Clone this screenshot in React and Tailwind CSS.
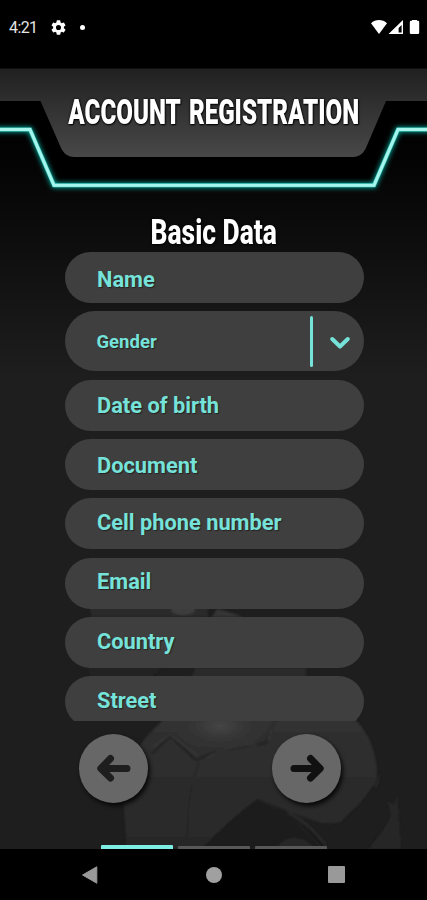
import React, { useState } from 'react';

const fields = [
  { name: 'name', label: 'Name', pad: 'pt-[5px]' },
  { name: 'gender', label: 'Gender', select: true },
  { name: 'birth', label: 'Date of birth', pad: 'pt-[2px]' },
  { name: 'document', label: 'Document', pad: 'pt-[4px]' },
  { name: 'phone', label: 'Cell phone number', pad: 'pb-[1px]' },
  { name: 'email', label: 'Email', pad: 'pb-[2px]' },
  { name: 'country', label: 'Country', pad: 'pb-[1px]' },
  { name: 'street', label: 'Street', pad: 'pb-[1px]' },
];

const StatusBar = () => (
  <div className="h-[68px] shrink-0 bg-black text-white flex items-start justify-between pl-[9px] pr-[7px] pt-[18px]">
    <div className="flex items-center h-[19px]">
      <span className="text-[16px] leading-[19px] w-[29px] tracking-[-0.6px] text-[#e4e4e4]">4:21</span>
      <svg viewBox="2 2 20 20" className="w-[15px] h-[15px] ml-[13px]" fill="#fff">
        <path d="M19.14 12.94c.04-.3.06-.61.06-.94s-.02-.64-.07-.94l2.03-1.58a.49.49 0 0 0 .12-.61l-1.92-3.32a.49.49 0 0 0-.59-.22l-2.39.96a7 7 0 0 0-1.62-.94l-.36-2.54A.48.48 0 0 0 13.92 2.4h-3.84a.47.47 0 0 0-.47.41l-.36 2.54c-.59.24-1.13.57-1.62.94l-2.39-.96a.48.48 0 0 0-.59.22L2.74 8.87a.47.47 0 0 0 .12.61l2.03 1.58a7 7 0 0 0 0 1.88l-2.03 1.58a.49.49 0 0 0-.12.61l1.92 3.32c.12.22.37.29.59.22l2.39-.96c.5.38 1.03.7 1.62.94l.36 2.54c.05.24.24.41.48.41h3.84c.24 0 .44-.17.47-.41l.36-2.54c.59-.24 1.13-.56 1.62-.94l2.39.96c.22.08.47 0 .59-.22l1.92-3.32a.47.47 0 0 0-.12-.61zM12 15.4a3.4 3.4 0 1 1 0-6.8 3.4 3.4 0 0 1 0 6.8z" />
      </svg>
      <span className="w-[5px] h-[5px] rounded-full bg-white ml-[14px]" />
    </div>
    <svg viewBox="0 0 50 18" className="w-[50px] h-[18px]" fill="#fff">
      <path d="M1 5.3C5.5 1 12.5 1 17 5.3L9 16z" />
      <path fillRule="evenodd" d="M33 2v14H18.500zM31.600 7v7.600h-3V10z" />
      <path d="M42 2.800V2h5v.8h1q1.200 0 1.200 1.200v10.800q0 1.200-1.200 1.200h-7q-1.200 0-1.200-1.200V4q0-1.200 1.200-1.200z" />
    </svg>
  </div>
);

const Header = () => (
  <header className="relative h-[132px] shrink-0">
    <svg viewBox="0 0 427 132" className="block w-full h-full">
      <defs>
        <linearGradient id="panel" x1="0" y1="0" x2="0" y2="1">
          <stop offset="0" stopColor="#202020" />
          <stop offset="1" stopColor="#484848" />
        </linearGradient>
        <filter id="glow" x="-10%" y="-40%" width="120%" height="180%">
          <feGaussianBlur stdDeviation="2.4" />
        </filter>
      </defs>
      <path d="M0 33H427V61H398L374 117H54L30 61H0z" fill="#000" />
      <path d="M0 .5H427V33H386L365.500 81Q361 89 353 89H74Q66 89 61.500 81L40.500 33H0z" fill="url(#panel)" />
      <path d="M-6 61.500H30L54 117.300H374L398 61.500H433" fill="none" stroke="#00a99b" strokeWidth="5" filter="url(#glow)" />
      <path d="M-6 61.500H30L54 117.300H374L398 61.500H433" fill="none" stroke="#51d5cb" strokeWidth="4" />
      <path d="M-6 61.500H30L54 117.300H374L398 61.500H433" fill="none" stroke="#a6f5ed" strokeWidth="2.800" />
    </svg>
    <div className="absolute inset-x-0 top-[23px] flex justify-center">
      <h1 className="whitespace-nowrap text-white text-[35px] leading-[44px] font-black scale-x-[0.69] [word-spacing:4px] [text-shadow:0_0_3px_#000,1px_1px_2px_#000]">
        ACCOUNT REGISTRATION
      </h1>
    </div>
  </header>
);

// faint football behind the lower half of the form
const BallArt = () => (
  <svg viewBox="0 0 427 260" className="absolute left-0 bottom-0 w-full h-[260px]">
    <defs>
      <linearGradient id="ball" x1="0" y1="0" x2="0" y2="1">
        <stop offset="0" stopColor="#333" />
        <stop offset="1" stopColor="#282828" />
      </linearGradient>
      <radialGradient id="shine">
        <stop offset="0" stopColor="#464646" />
        <stop offset="1" stopColor="#303030" stopOpacity="0" />
      </radialGradient>
      <filter id="soft">
        <feGaussianBlur stdDeviation="0.9" />
      </filter>
    </defs>
    <g filter="url(#soft)">
      <path d="M88 12H208V28H92z" fill="#2a2a2a" />
      <path d="M212 28L217 20Q228 22 243 28z" fill="#343434" />
      <ellipse cx="183" cy="21" rx="12" ry="5" fill="#3d3d3d" />
      <path d="M88 78H163L148 90H92z" fill="#242424" />
      <path d="M196 78H306V92H190z" fill="#2c2c2c" />
      <path d="M127 260L123 205Q125 165 161 133Q190 100 240 92Q310 95 357 132Q377 155 377 188Q370 206 341 233Q331 235 321 234L298 226L257 210L200 260z" fill="url(#ball)" />
      <ellipse cx="220" cy="137" rx="52" ry="28" fill="url(#shine)" />
      <path d="M152 165L170 147L196 171Q225 158 260 155L266 154Q270 138 277 130" fill="none" stroke="#242424" strokeWidth="2.500" />
      <path d="M153 158L170 146L198 167M206 169Q228 156 257 155M268 151Q270 138 277 130" fill="none" stroke="#3f3f3f" strokeWidth="1" />
      <path d="M199 173Q185 210 188 260" fill="none" stroke="#252525" strokeWidth="1.500" />
      <path d="M200 261Q230 230 257 210L290 226L326 261z" fill="#1f1f1f" />
      <path d="M278 257Q290 244 306 252L315 260H280z" fill="#272727" />
      <path d="M288 223Q310 235 326 256" fill="none" stroke="#303030" strokeWidth="1.500" />
      <path d="M368 260Q388 238 391 225L388 212L394 216L397 206L401 260z" fill="#262626" />
      <path d="M374 196L381 184Q380 192 376 200z" fill="#282828" />
    </g>
  </svg>
);

const Field = ({ field, value, onChange }) => {
  if (field.select) {
    return (
      <button
        type="button"
        className="w-full h-[60px] shrink-0 flex items-center rounded-full bg-[#3f3f3f] pl-[32px] pr-[13px] text-left"
      >
        <span className="flex-1 pt-[3px] text-[#75e3da] text-[18.5px] font-bold [text-shadow:1px_1px_1px_#282020]">
          {field.label}
        </span>
        <span className="w-[3px] h-[51px] rounded-full bg-[#75e3da] mr-[16px]" />
        <svg viewBox="0 0 22 14" className="w-[22px] h-[14px] mt-[3px]" fill="none" stroke="#75e3da" strokeWidth="4" strokeLinecap="round" strokeLinejoin="round">
          <path d="M3.200 3L11 10.500L18.800 3" />
        </svg>
      </button>
    );
  }

  return (
    <div className={`w-full h-[51px] shrink-0 rounded-full bg-[#3f3f3f] pl-[32.5px] pr-6 flex items-center ${field.pad}`}>
      <input
        type="text"
        name={field.name}
        value={value}
        onChange={onChange}
        placeholder={field.label}
        className="w-full bg-transparent outline-none text-[#75e3da] placeholder:text-[#75e3da] text-[21.8px] leading-[30px] font-bold [text-shadow:1px_1px_1px_#282020]"
      />
    </div>
  );
};

const RoundButton = ({ onClick, flip }) => (
  <button
    type="button"
    onClick={onClick}
    className="w-[69px] h-[69px] rounded-full bg-[#676767] flex items-center justify-center shadow-[2px_3px_4px_0px_#080808]"
  >
    <svg viewBox="0 0 36 30" className={flip ? 'w-[36px] h-[30px] -scale-x-100' : 'w-[36px] h-[30px]'} fill="none" stroke={flip ? '#111' : '#1e1e1e'} strokeWidth="7" strokeLinecap="round" strokeLinejoin="round">
      <path d="M31 15.500H6M14.500 5.500L4.800 15.500L14.500 25" />
    </svg>
  </button>
);

const App = () => {
  const [formData, setFormData] = useState({});
  const [step, setStep] = useState(0);

  const handleChange = (e) => {
    setFormData({ ...formData, [e.target.name]: e.target.value });
  };

  return (
    <div className="w-full max-w-[427px] h-[900px] flex flex-col overflow-hidden bg-black font-['Roboto',sans-serif]">
      <StatusBar />

      <div className="relative flex-1 flex flex-col overflow-hidden bg-[linear-gradient(to_bottom,#000_0px,#030303_90px,#1e1e1e_310px,#1e1e1e_100%)]">
        <BallArt />
        <Header />

        {/* Form */}
        <form className="relative w-[299px] ml-[64.5px] h-[521px] shrink-0 overflow-hidden flex flex-col gap-[8.3px]">
          <div className="h-[43.8px] shrink-0 flex justify-center pt-[13px]">
            <h2 className="whitespace-nowrap text-white text-[35px] leading-[40px] font-extrabold scale-x-[0.755] [text-shadow:0_0_3px_#000,1px_1px_2px_#000]">
              Basic Data
            </h2>
          </div>
          {fields.map((field) => (
            <Field
              key={field.name}
              field={field}
              value={formData[field.name] || ''}
              onChange={handleChange}
            />
          ))}
        </form>

        {/* Navigation */}
        <div className="relative flex justify-between pl-[79.4px] pr-[85.6px] pt-[12.5px]">
          <RoundButton onClick={() => setStep(Math.max(step - 1, 0))} />
          <RoundButton onClick={() => setStep(Math.min(step + 1, 2))} flip />
        </div>

        {/* Steps */}
        <div className="relative mt-auto flex gap-[5px] pl-[101px]">
          {[0, 1, 2].map((i) => (
            <span
              key={i}
              className={`w-[72px] rounded-t-[1px] ${i === step ? 'h-[4px] bg-[#7eeee4]' : 'h-[3px] mt-[1px] bg-[#585858]'}`}
            />
          ))}
        </div>
      </div>

      {/* Android bar */}
      <div className="h-[51px] shrink-0 bg-black flex items-center justify-between pl-[81px] pr-[82px]">
        <svg viewBox="0 0 17 20" className="w-[17px] h-[20px]">
          <path d="M1.500 10L15.800 1.800V18.200z" fill="#999" stroke="#999" strokeLinejoin="round" />
        </svg>
        <span className="w-[16px] h-[16px] ml-px rounded-full bg-[#a0a0a0]" />
        <span className="w-[17px] h-[17px] rounded-[1px] bg-[#999]" />
      </div>
    </div>
  );
};

export default App;
